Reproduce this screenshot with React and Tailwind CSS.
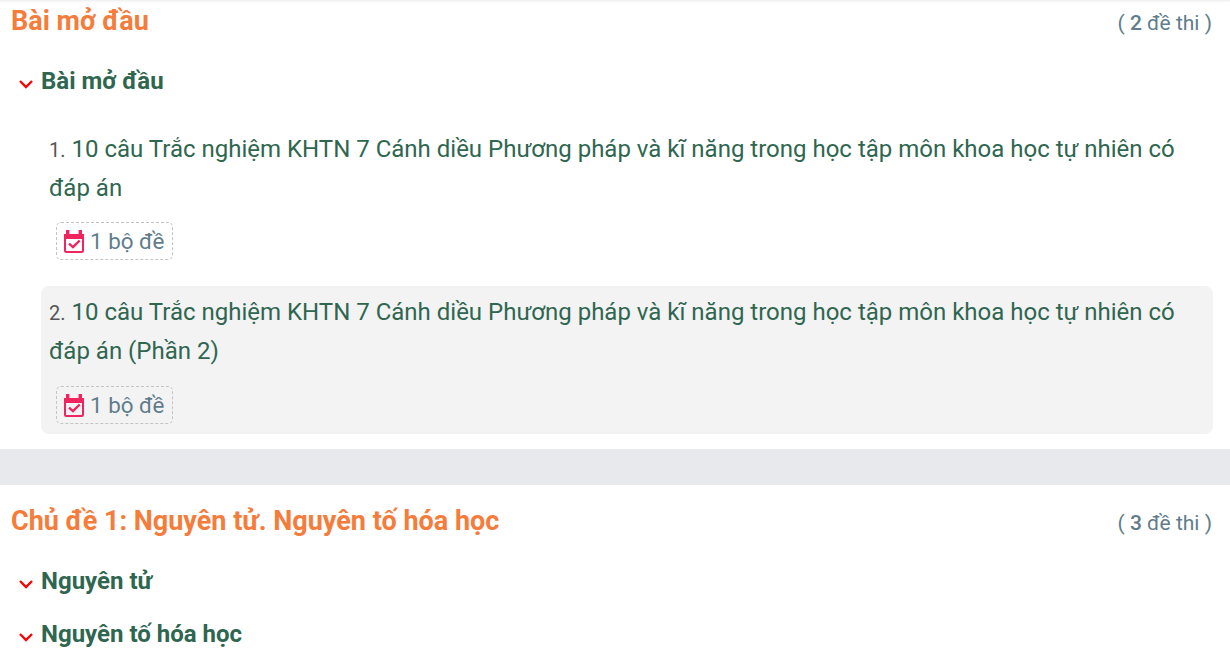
import React from 'react';

const Chevron = () => (
  <svg width="14" height="14" viewBox="0 0 14 14" className="shrink-0 mt-[13px] mr-[8px]">
    <path d="M1 4 L7 10 L13 4" fill="none" stroke="#ff0000" strokeWidth="2.4" />
  </svg>
);

const CalendarCheck = () => (
  <svg width="20" height="23" viewBox="0 0 20 23" className="shrink-0">
    <rect x="1" y="5" width="18" height="17" rx="1.5" fill="none" stroke="#f0245f" strokeWidth="2" />
    <rect x="0" y="4" width="20" height="5" fill="#f0245f" />
    <rect x="2" y="0" width="3.4" height="5" fill="#f0245f" />
    <rect x="14.6" y="0" width="3.4" height="5" fill="#f0245f" />
    <path d="M5 13.7 L9 17.2 L15.7 10.5" fill="none" stroke="#f0245f" strokeWidth="2.4" />
  </svg>
);

const SetBadge = () => (
  <div className="ml-[7px] inline-flex items-center h-[38px] w-[117px] pl-[7px] border border-dashed border-[#c4c4c4] rounded-[5px] text-[22.4px] text-[#5f7d8c]">
    <CalendarCheck />
    <span className="ml-[6px] mt-[1px]">1 bộ đề</span>
  </div>
);

const Lesson = ({ num, title, active }) => (
  <div className={`pl-2 pr-[26px] pt-[7px] pb-[10px] rounded-lg ${active ? 'bg-[#f3f3f4] mb-[15px]' : 'mb-[16px]'}`}>
    <div className={`text-[24px] leading-[39px] text-[#2f6650] ${active ? 'mb-[15px]' : 'mb-[14px]'}`}>
      <span className="text-[20px] leading-none text-[#555] mr-[6px]">{num}.</span>
      {title}
    </div>
    <SetBadge />
  </div>
);

const SubTopic = ({ title }) => (
  <div className="flex pl-[19px] h-[53px] items-start">
    <Chevron />
    <span className="text-[24px] leading-[34px] font-bold text-[#2f6650]">{title}</span>
  </div>
);

const SectionHead = ({ title, count }) => (
  <div className="flex items-center justify-between pl-[11px] pr-[18px] h-[36px]">
    <span className="text-[27px] font-bold text-[#f57c3a]">{title}</span>
    <span className="text-[21px] mt-[6px] text-[#5f7d8c]">( <span className="font-medium">{count}</span> đề thi )</span>
  </div>
);

export default function App() {
  return (
    <div className="w-[1230px] h-[660px] overflow-hidden bg-white font-['Roboto',sans-serif]">
      <div className="h-[3px] bg-gradient-to-b from-[#efefef] to-white" />
      <SectionHead title="Bài mở đầu" count="2" />
      <div className="mt-[25px]">
        <SubTopic title="Bài mở đầu" />
      </div>
      <div className="ml-[41px] mr-[17px] mt-[6px]">
        <Lesson num="1" title="10 câu Trắc nghiệm KHTN 7 Cánh diều Phương pháp và kĩ năng trong học tập môn khoa học tự nhiên có đáp án" />
        <Lesson active num="2" title="10 câu Trắc nghiệm KHTN 7 Cánh diều Phương pháp và kĩ năng trong học tập môn khoa học tự nhiên có đáp án (Phần 2)" />
      </div>
      <div className="h-[36px] bg-[#e8e9ed]" />
      <div className="pt-[18px]">
        <SectionHead title="Chủ đề 1: Nguyên tử. Nguyên tố hóa học" count="3" />
        <div className="mt-[25px]">
          <SubTopic title="Nguyên tử" />
          <SubTopic title="Nguyên tố hóa học" />
        </div>
      </div>
    </div>
  );
}
